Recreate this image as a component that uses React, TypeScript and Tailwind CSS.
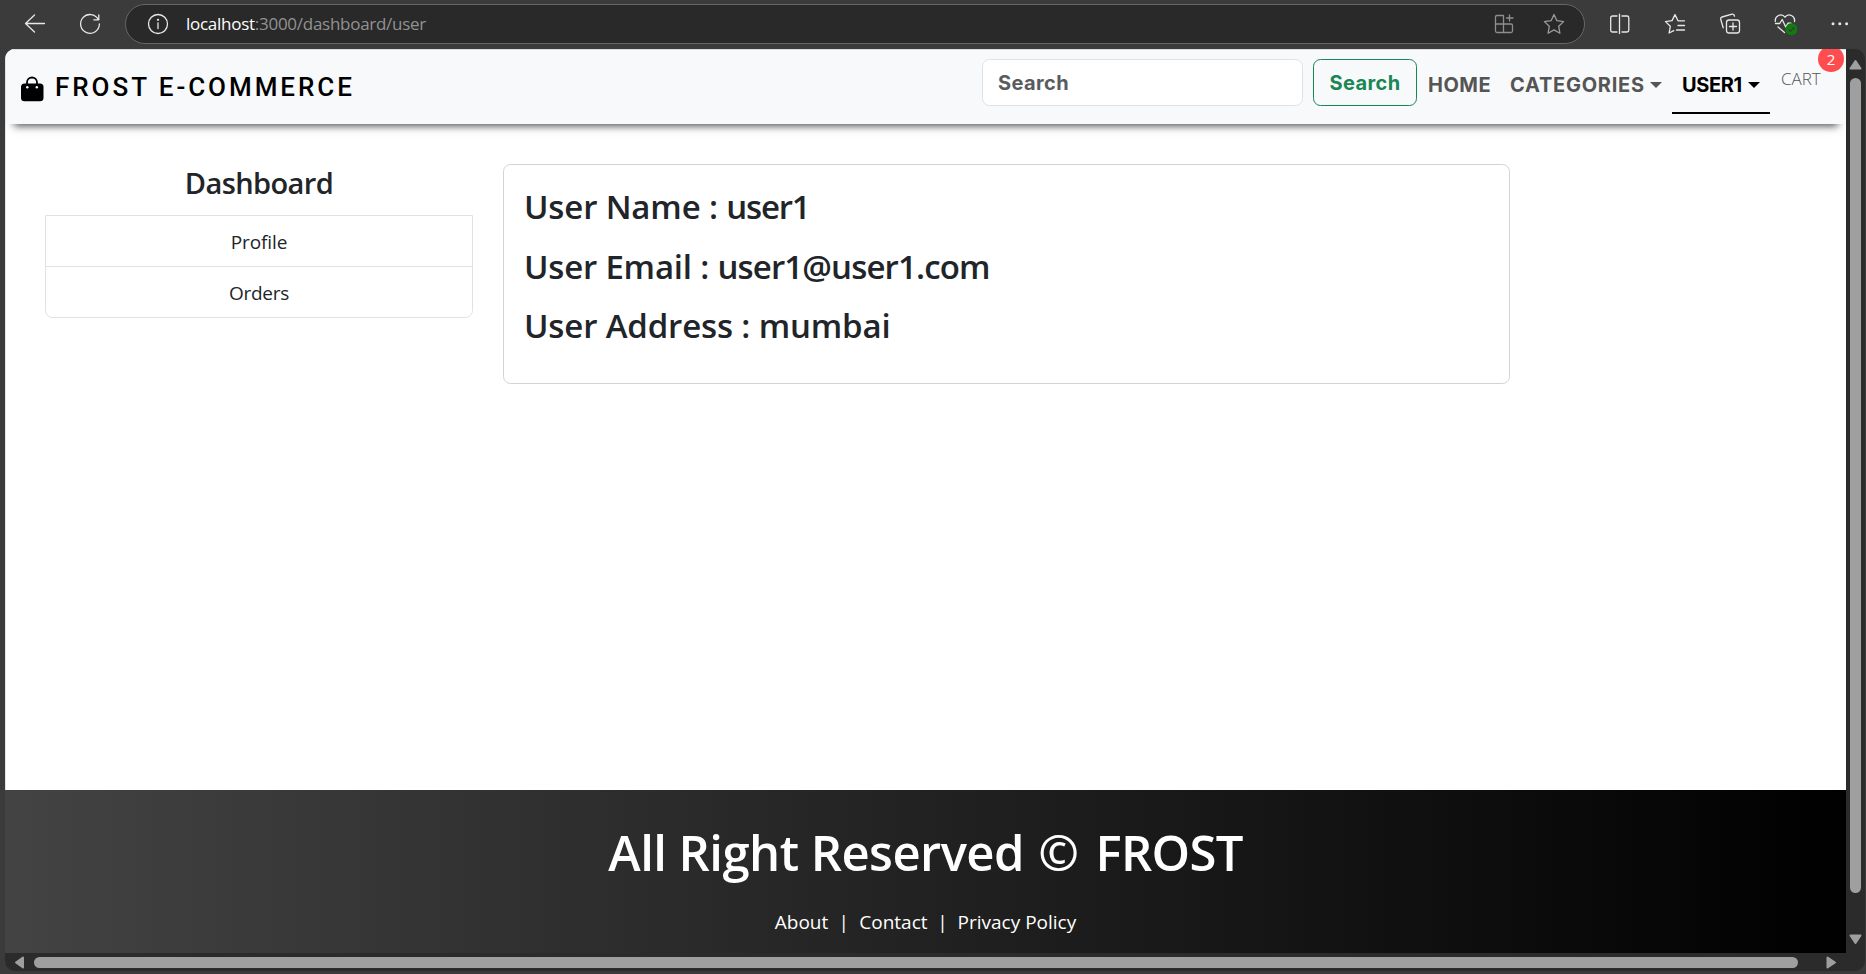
import type { ReactNode } from "react";

function Icon({ children, className = "" }: { children: ReactNode; className?: string }) {
  return (
    <svg
      width="24"
      height="24"
      viewBox="0 0 24 24"
      fill="none"
      stroke="currentColor"
      strokeWidth="1.3"
      strokeLinecap="round"
      strokeLinejoin="round"
      className={`shrink-0 ${className}`}
    >
      {children}
    </svg>
  );
}

function Toolbar() {
  return (
    <div className="flex h-[49px] shrink-0 items-start bg-[#3b3b3b] pt-1 text-[#e8e8e8]">
      <div className="flex h-10 items-center">
        <Icon className="ml-[23px]">
          <path d="M21.5 11.5H2.5M11.5 3l-9 8.500l9 8.500" />
        </Icon>
        <Icon className="ml-[31px]">
          <path d="M20.300 7.500A9.400 9.400 0 1 0 21.400 12M20.800 2.800v5h-5" />
        </Icon>
      </div>
      <div className="ml-[23px] flex h-10 w-[1460px] items-center rounded-full border border-[#666] bg-[#292929]">
        <Icon className="ml-5">
          <circle cx="12" cy="12" r="9.500" />
          <path d="M12 10.800v5.700" />
          <circle cx="12" cy="7.800" r=".5" fill="currentColor" />
        </Icon>
        <div className="ml-[16px] flex-1 whitespace-nowrap text-[17px] leading-6 tracking-[-0.27px] text-[#929292]">
          <span className="text-white">localhost</span>:3000/dashboard/user
        </div>
        <Icon className="mr-[26px] text-[#8e8e8e]">
          <path d="M11.500 3.500H5a1.500 1.500 0 0 0-1.500 1.500v14A1.500 1.500 0 0 0 5 20.500h14a1.500 1.500 0 0 0 1.500-1.500v-5.500a1.500 1.500 0 0 0-1.500-1.500H3.500M11.500 3.500v17M17.500 3v6M14.500 6h6.500" />
        </Icon>
        <Icon className="mr-[18px] text-[#9a9a9a]">
          <path d="M12 2.500l2.900 6.200 6.700.9-4.900 4.700 1.200 6.900L12 17.900l-5.900 3.300 1.200-6.900-4.900-4.700 6.700-.9z" />
        </Icon>
      </div>
      <div className="ml-[23px] flex h-10 items-center gap-[31px]">
        <Icon>
          <path d="M9 4H4.500A1.800 1.800 0 0 0 2.700 5.800v12.400A1.800 1.800 0 0 0 4.500 20H9M14 4h5a1.800 1.800 0 0 1 1.800 1.800v12.400A1.800 1.800 0 0 1 19 20h-5M11.500 2.200v19.300" />
        </Icon>
        <Icon>
          <path d="M21.500 8.800H15L12 2.600 9 8.600l-6.500 1 4.800 4.700-1.200 6.700 4.700-2.400M15 13.500h6.500M13.500 18h8" />
        </Icon>
        <Icon>
          <path d="M16.500 4.200l-.3-.9a1.800 1.800 0 0 0-2.200-1.100L4 5a1.800 1.800 0 0 0-1.300 2.200l2.500 8.600" />
          <rect x="8.500" y="8" width="13" height="13" rx="2.500" />
          <path d="M15 11v7M11.500 14.500h7" />
        </Icon>
        <Icon>
          <path d="M2.300 9.500C1.500 4 8.500.5 12 5.200 15.500.5 22.500 4 21.500 9.500M2.500 11.500h4.200l2.500-4 3.500 7.500 2.300-3.800H18M5 15l6.500 5.500" />
          <circle cx="18.500" cy="17.200" r="6" fill="#107c10" stroke="none" />
          <path d="M15.900 17.500l1.800 1.700 3.300-3.500" stroke="#3b3b3b" />
        </Icon>
        <Icon>
          <g fill="currentColor" stroke="none">
            <circle cx="5" cy="11.800" r="1.500" />
            <circle cx="11.800" cy="11.800" r="1.500" />
            <circle cx="18.600" cy="11.800" r="1.500" />
          </g>
        </Icon>
      </div>
    </div>
  );
}

function Caret() {
  return (
    <svg width="12" height="6" viewBox="0 0 12 6" className="shrink-0" fill="currentColor">
      <path d="M0 0h12L6 6z" />
    </svg>
  );
}

function Navbar() {
  return (
    <div className="relative flex h-[75px] shrink-0 items-start border-t border-[#dcdddf] bg-[#f8f9fb] shadow-[0_10px_8px_-8px_rgba(0,0,0,0.7)]">
      <svg width="24" height="26" viewBox="0 0 24 26" className="ml-[14px] mt-[26px]">
        <path d="M7 9V6.500a5 5 0 0 1 10 0V9" fill="none" stroke="#000" strokeWidth="1.800" />
        <rect x="1" y="7.500" width="22.500" height="17.800" rx="3.500" />
        <circle cx="7.300" cy="11.200" r="1.200" fill="#f8f9fb" />
        <circle cx="16.800" cy="11.200" r="1.200" fill="#f8f9fb" />
      </svg>
      <div className="ml-[11px] mt-[19px] whitespace-nowrap font-[Roboto] text-[26px] font-medium leading-9 tracking-[2.95px] text-black">
        FROST E-COMMERCE
      </div>
      <div className="ml-auto flex items-start whitespace-nowrap font-['Inter'] text-[20px] font-bold text-[#555]">
        <div className="mt-[9px] flex h-[47px] w-[321px] items-center rounded-[7.500px] border border-[#dee2e6] bg-white pl-[15px] tracking-[0.4px] text-[#595c5f]">
          Search
        </div>
        <div className="ml-[10px] mt-[9px] flex h-[47px] w-[104px] items-center justify-center rounded-[7.500px] border border-[#198754] tracking-[0.4px] text-[#198754]">
          Search
        </div>
        <div className="ml-[11px] mt-[14px] w-[63px] leading-[42px] tracking-[0.5px]">HOME</div>
        <div className="ml-[19px] mt-[14px] flex w-[152px] items-center justify-between leading-[42px] tracking-[0.75px]">
          CATEGORIES
          <Caret />
        </div>
        <div className="ml-[10px] mt-[14px] flex h-[50px] w-[98px] items-start justify-between border-b-2 border-black px-[10px] leading-[42px] tracking-[-0.4px] text-black">
          USER1
          <span className="flex h-[42px] items-center">
            <Caret />
          </span>
        </div>
        <div className="ml-[11px] mt-[16px] w-[65px] font-['Open_Sans'] text-[17px] font-light leading-[26px] text-[#555]">
          CART
        </div>
      </div>
      <div className="absolute right-[2px] top-[-1px] flex h-[23px] w-[26px] items-end overflow-hidden">
        <div className="flex h-[26px] w-[26px] shrink-0 items-center justify-center rounded-full bg-[#ff4d4f] text-[15px] leading-none text-white">
          2
        </div>
      </div>
    </div>
  );
}

function Sidebar() {
  return (
    <div className="w-[428px] text-center text-[#212529]">
      <div className="mb-[13px] text-[29px] font-semibold leading-[38px] tracking-[-0.6px]">Dashboard</div>
      <div className="rounded-b-[7.500px] border border-[#dee2e6] text-[19px]">
        <div className="border-b border-[#dee2e6] pt-0.5 leading-[48px] tracking-[-0.1px]">Profile</div>
        <div className="pt-0.5 leading-[48px] tracking-[-0.25px]">Orders</div>
      </div>
    </div>
  );
}

function UserCard() {
  return (
    <div className="ml-[30px] h-[220px] w-[1007px] whitespace-nowrap rounded-[7.500px] border border-[#d3d3d4] pl-5 pt-[12px] text-[33px] font-semibold leading-[59.500px] text-[#212529]">
      <div className="tracking-[-0.15px]">
        User Name : <span className="tracking-[-1.2px]">user1</span>
      </div>
      <div className="tracking-[-0.2px]">
        User Email : <span className="tracking-[-0.85px]">user1@user1.com</span>
      </div>
      <div className="tracking-[-0.15px]">User Address : mumbai</div>
    </div>
  );
}

function Footer() {
  return (
    <div className="-ml-px flex h-[163px] shrink-0 flex-col items-center whitespace-nowrap bg-[linear-gradient(to_right,#434343_0%,#000_100%)] pt-[32px] text-white">
      <div className="text-[49px] font-semibold leading-[60px] tracking-[-0.55px]">
        All Right Reserved <span className="ml-[2px] mr-[5px]">©</span> <span className="tracking-[-0.7px]">FROST</span>
      </div>
      <div className="mt-[28px] flex text-[19px] leading-6">
        <span>About</span>
        <span className="w-[31px] text-center">|</span>
        <span>Contact</span>
        <span className="w-[30px] text-center">|</span>
        <span>Privacy Policy</span>
      </div>
    </div>
  );
}

function Arrow({ d, w, h, className = "" }: { d: string; w: number; h: number; className?: string }) {
  return (
    <svg width={w} height={h} viewBox={`0 0 ${w} ${h}`} className={`shrink-0 ${className}`}>
      <path d={d} fill="#9f9f9f" stroke="#9f9f9f" strokeWidth="2" strokeLinejoin="round" />
    </svg>
  );
}

export default function App() {
  return (
    <div className="flex h-[974px] w-[1866px] flex-col overflow-hidden bg-[#3b3b3b] font-['Open_Sans',sans-serif]">
      <Toolbar />
      <div className="ml-[5px] flex h-[922px] w-[1860px] flex-col overflow-hidden rounded-[10px] bg-[#2b2b2b]">
        <div className="flex h-[904px]">
          <div className="flex w-[1841px] flex-col overflow-hidden bg-white pl-px shadow-[inset_1px_0_0_#e4e4e4]">
            <Navbar />
            <div className="flex flex-1 items-start pl-[39px] pt-10">
              <Sidebar />
              <UserCard />
            </div>
            <Footer />
          </div>
          <div className="flex w-[19px] flex-col items-start pl-[3px]">
            <Arrow w={13} h={11} d="M1.500 9.500h10L6.500 2z" className="mt-[10px]" />
            <div className="ml-px mt-[8px] h-[815px] w-[11px] rounded-full bg-[#9f9f9f]" />
            <Arrow w={13} h={11} d="M1.500 1.500h10L6.500 9z" className="mt-[41px]" />
          </div>
        </div>
        <div className="flex items-start pt-[3px]">
          <Arrow w={11} h={13} d="M9 1.500v10L2 6.500z" className="ml-[9px]" />
          <div className="ml-[9px] mt-px h-[11px] w-[1764px] rounded-full bg-[#9f9f9f]" />
          <Arrow w={11} h={13} d="M1.500 1.500v10L9 6.500z" className="ml-[28px]" />
        </div>
      </div>
    </div>
  );
}
